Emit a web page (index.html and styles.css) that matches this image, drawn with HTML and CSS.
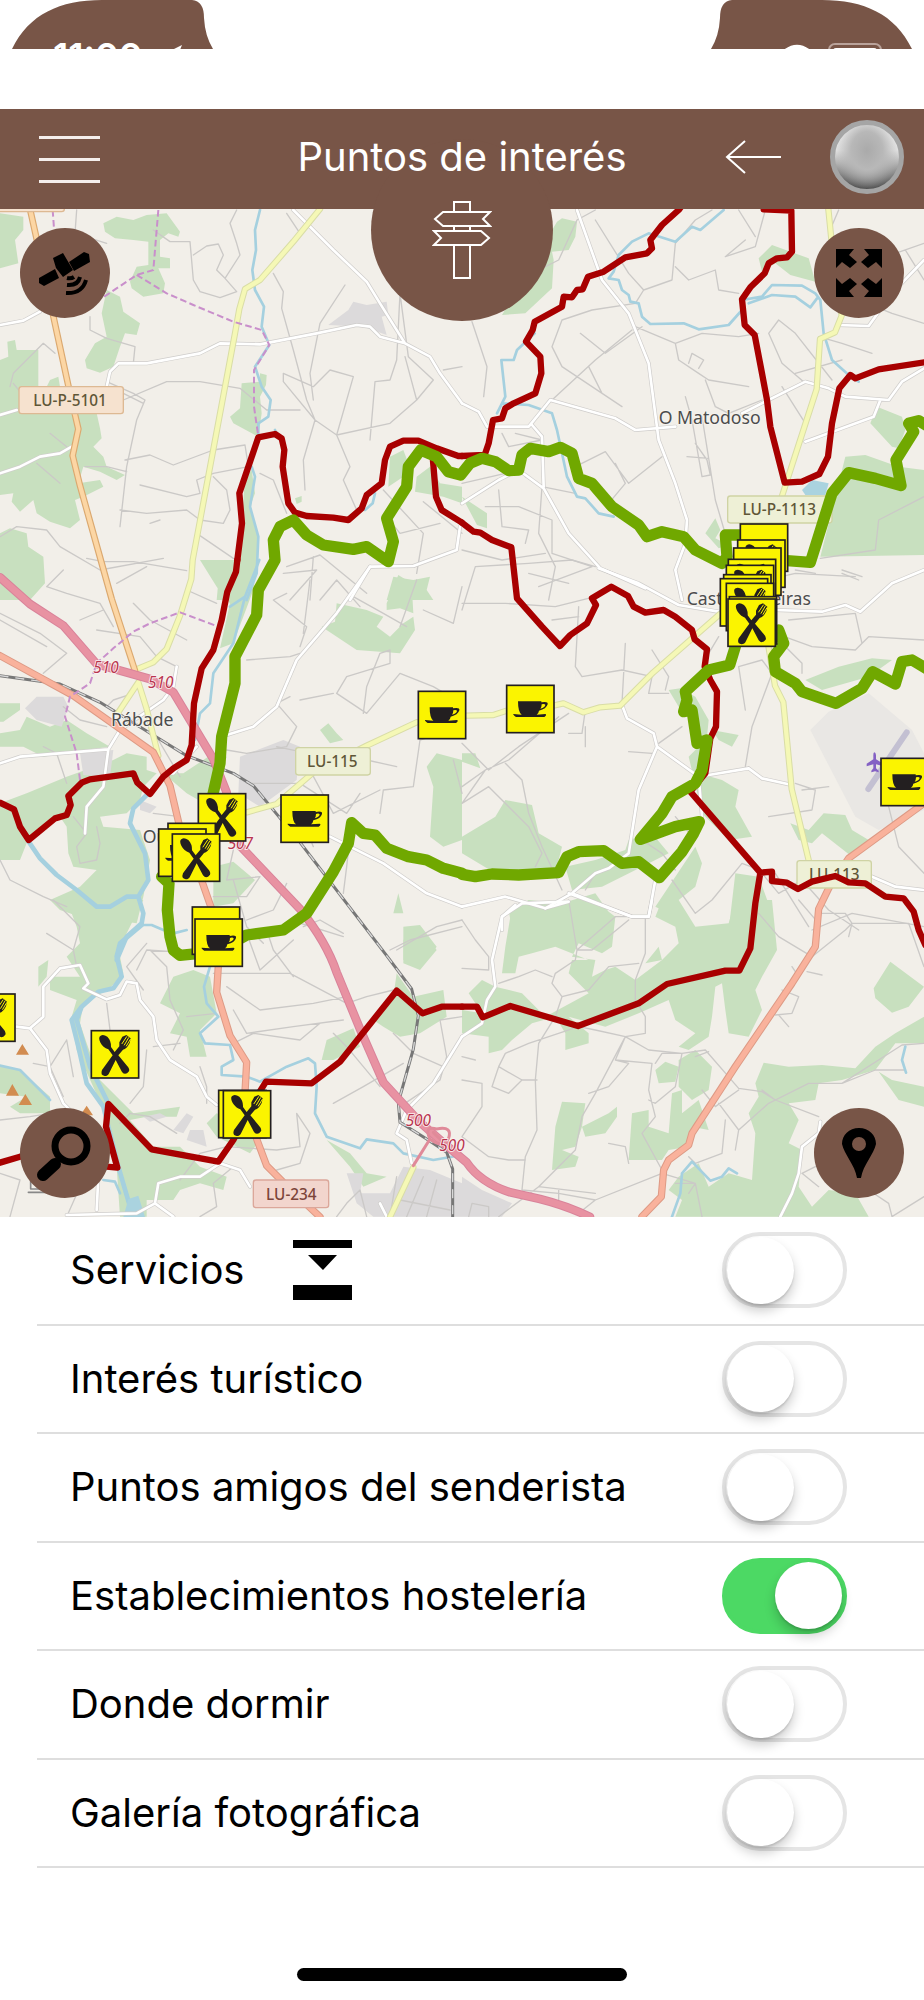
FILE: index.html
```html
<!DOCTYPE html>
<html lang="es">
<head>
<meta charset="utf-8">
<meta name="viewport" content="width=device-width, initial-scale=1">
<title>Puntos de interés</title>
<link rel="stylesheet" href="styles.css">
</head>
<body>
<div class="status">
  <div class="ear ear-left">
    <svg class="ear-shape" viewBox="0 0 202 49" aria-hidden="true"><path d="M0 49C17 14 48 0 90 0H180Q192 1 192 18Q193 36 201 49Z"/></svg>
    <div class="status-items"><span class="clock">11:00</span>
    <svg class="locate" viewBox="0 0 22 22" aria-hidden="true"><path d="M22 0L0 11L11 12L13 22Z"/></svg></div>
  </div>
  <div class="ear ear-right">
    <svg class="ear-shape" viewBox="0 0 202 49" aria-hidden="true"><path d="M202 49C185 14 154 0 112 0H22Q10 1 10 18Q9 36 1 49Z"/></svg>
    <div class="status-items">
    <svg class="wifi" viewBox="0 0 36 26" aria-hidden="true"><path d="M1 9Q18-7 35 9L31 13Q18 1 5 13Z"/><path d="M8 15Q18 7 28 15L18 25Z"/></svg>
    <svg class="battery" viewBox="0 0 54 26" aria-hidden="true"><rect class="cell" x="1" y="1" width="52" height="24" rx="6"/><rect x="5" y="5" width="44" height="16" rx="3"/></svg></div>
  </div>
</div>

<header class="bar">
  <button class="menu" aria-label="Menú"><span></span><span></span><span></span></button>
  <h1>Puntos de interés</h1>
  <div class="bar-end">
    <button class="back" aria-label="Volver"><svg viewBox="0 0 56 36"><path d="M56 18H2M20 2L2 18L20 34"/></svg></button>
    <button class="avatar" aria-label="Perfil"></button>
  </div>
</header>

<main>
<section class="map" aria-label="Mapa">
<svg class="canvas" viewBox="0 0 2772 3024">
<defs>
  <g id="plate"><rect class="plate" x="2" y="2" width="142" height="142"/></g>
  <g id="fork"><use href="#plate"/>
    <path class="ink" d="M30 17C18 22 32 52 53 58L66 76L34 120Q28 136 42 138Q52 138 56 128L75 90L94 126Q104 138 115 124Q118 116 109 107L83 76L97 59Q108 57 117 39L120 25L107 15L95 20L86 37L86 49L72 66L61 51Q62 32 50 20Q38 12 30 17Z"/>
    <path class="tines" d="M108 20L94 41M114 23L101 45M119 28L107 48"/></g>
  <g id="cup"><use href="#plate"/>
    <path class="ink" fill-rule="evenodd" d="M36 50H106V53Q127 49 125 59Q121 73 99 78Q98 86 92 90L118 88Q124 90 115 97H30Q20 90 22 88L47 90Q36 83 36 50ZM107 59Q107 68 103 72Q118 68 118 60Q115 56 107 59Z"/></g>
</defs>

<g class="wood">
  <g transform="translate(0,-27)">
    <path d="M0 40L70 50L70 90L45 120L55 190L0 205ZM310 70L350 50L400 60L440 45L500 40L540 95L535 110L505 100L480 120L480 170L510 175L510 205L475 205L495 250L490 280L430 290L395 265L390 245L410 200L445 195L445 125L400 120L345 115L315 95ZM320 270L360 290L370 335L420 370L410 405L375 400L360 440L340 500L300 518L260 505L255 480L285 430L320 410L305 340Z"/>
    <path d="M0 480L25 470L22 425L45 420L50 450L115 450L115 560L60 570L80 640L290 640L300 685L305 715L280 740L310 770L320 800L375 825L350 840L300 815L250 800L235 850L300 840L310 860L250 890L225 900L240 960L210 985L150 965L110 940L100 900L60 935L35 905L40 880L0 885ZM0 1000L30 985L80 1000L85 1040L130 1070L135 1150L90 1200H0ZM150 540L175 530L180 560L140 560ZM725 550L780 545L780 520L800 525L798 555L780 590L785 640L775 710L700 670L690 650L720 625ZM735 830L755 810L765 880L750 920L775 1010L770 1120L740 1200H650L655 1145L700 1130L720 1040L728 930ZM885 895L905 888L905 905L890 912ZM1170 770L1210 750L1225 790L1210 830L1165 860ZM1250 830L1290 800L1320 850L1386 860V910L1330 890L1245 875ZM1180 1130L1240 1140L1290 1130L1280 1170L1300 1200H1160Z"/>
  </g>
  <g transform="translate(1386,-27)">
    <path d="M285 65L300 55L345 65L340 110L320 150L270 155L275 180L270 265L190 340L120 345ZM890 175L930 135L1040 175L1060 245L985 225L940 190L900 215ZM1225 670L1245 620L1320 650L1330 690L1310 745L1290 740ZM1135 830L1150 770L1210 765L1280 790L1310 800L1386 810V1065L1075 1070ZM730 1000L760 955L775 990L760 1015L800 1035L770 1045ZM0 890L75 940L75 985L45 975Z"/>
  </g>
  <g transform="translate(0,1053)">
    <path d="M1010 130L1100 150L1150 170L1130 200L1170 230L1210 190L1240 170L1245 210L1200 280L1070 270L965 200L1005 185ZM1160 130L1195 45L1235 70L1240 160L1200 145L1160 150ZM600 0H720L770 10L760 90L700 250L660 265L690 130L650 80ZM0 430L60 430L60 450L10 485H0ZM80 470L150 500L200 480L260 520L330 560L250 570L130 590L70 560L0 560V520L60 510ZM340 600L380 580L440 590L440 630L470 640L430 680L420 720L380 760L300 770L310 800L420 810L450 900L430 1010L410 1090L340 1080L240 1070L180 1050L150 1020L240 980L290 930L220 920L205 880L200 800L180 770L80 850L60 900H0V730L80 700L200 650ZM550 640L640 580L680 590L630 740L560 700L490 640ZM960 510L985 490L1010 520L1030 540L990 550ZM1280 620L1310 580L1386 600V840L1330 860L1290 830L1300 680ZM640 920L700 905L765 960L700 1030L640 1040ZM1195 1000L1210 1060L1180 1060ZM1210 1100L1260 1095L1310 1160L1280 1200L1210 1200Z"/>
  </g>
  <g transform="translate(1386,813)">
    <path d="M0 820L40 820L55 865L0 845ZM620 630L655 625L700 650L740 720L735 770L690 760L680 690L650 680ZM750 750L830 765L810 800L770 780ZM1030 600L1130 560L1230 535L1290 540L1220 590L1080 630ZM0 1070L100 1010L130 960L210 975L230 1060L300 1100L280 1180L200 1190L100 1180L0 1120ZM310 1160L400 1140L490 1110L500 1080L570 1060L620 1120L540 1160L420 1220L330 1230ZM680 830L720 790L740 830L710 880L780 900L830 930L820 980L870 1070L800 1080L720 1000ZM985 1030L1040 1050L1085 1000L1150 1005L1170 1050L1220 1080L1170 1130L1080 1060L1050 1090L1010 1080ZM140 1290L200 1260L300 1270L400 1240L450 1310L430 1350H150ZM580 1280L700 1100L720 1150L700 1220L650 1260L620 1300ZM820 1180L890 1190L930 1300V1350H800Z"/>
  </g>
  <g transform="translate(0,2073)">
    <path d="M200 0H430L380 100L360 170L370 220L330 265L250 310L240 370L260 430L300 540L400 640L540 620L530 650L440 650L390 660L460 740L540 740L600 800L680 830L670 870L600 850L540 870L520 900L440 900L440 950H360L350 800L320 650L230 450L215 350L230 300L150 270L150 230L240 230L200 170L240 130L230 80ZM115 200L145 180L140 230L115 260ZM520 230L580 210L630 230L650 340L600 390L620 470L570 470L560 410L510 400L540 340L480 310ZM0 495L60 510L150 590L150 640L60 640L30 620L80 590L0 580ZM620 670L650 640L700 660L780 720L750 760L690 730L650 710ZM980 420L1060 385L1080 440L1000 480H965ZM1190 220L1240 290L1330 270L1340 350L1260 400L1200 410L1150 380L1120 360L1180 290ZM1210 120L1260 80L1310 150L1260 210L1210 190ZM980 720L1050 760L1100 820L1160 830L1090 860L1050 800Z"/>
  </g>
  <g transform="translate(1386,2073)">
    <path d="M150 20L310 0L320 60L420 20L460 50L450 140L420 160L350 130L330 170L400 180L390 230L430 210L460 200L520 240L600 180L550 190L590 140L600 180L650 130L640 80L580 50L600 0H650L700 80L800 70L820 0H930L945 150L900 230L880 270L900 330L860 410L800 400L790 330L780 250L760 260L750 350L740 410L680 450L650 440L700 400L640 360L620 300L530 340L430 380L320 350L380 400L380 430L310 450L310 400L280 350L210 370L150 420L120 450L80 460L80 410L0 400V330L60 340L20 280L60 240L100 260L180 280L250 350L380 280L320 220L330 180L380 180L280 140L210 160L170 170L160 220L120 220L130 140Z"/>
    <path d="M1235 265L1285 185L1386 260L1340 320L1290 338L1240 295ZM905 488L980 500L1080 495L1180 505L1240 440L1300 400L1386 350V430L1300 430L1240 510L1140 540L1070 550L1060 600L980 610L1010 660L980 730L1020 750L1010 860L1050 920L1100 870L1180 880L1220 950H640L660 900L620 870L650 830L710 790L740 860L800 820L870 840L880 700L860 640L890 590L880 550ZM1250 515L1290 540L1386 560V620L1310 600ZM300 605L370 610L360 680L340 740L300 750L350 770L340 800L270 810L280 680ZM580 510L610 485L650 500L640 545L590 550ZM650 480L700 450L750 500L740 570L690 600L650 560ZM500 780L510 640L560 630L560 680L620 700L630 580L660 570L660 640L710 600L740 690L690 680L680 740L620 750L600 780ZM360 680L440 640L465 620L465 650L430 700L370 710Z"/>
  </g>
</g>

<g class="town">
  <path transform="translate(0,-27)" d="M985 375L1045 330L1060 305L1100 315L1160 305L1165 345L1145 350L1160 405L1090 380Z"/>
  <path transform="translate(0,1053)" d="M75 445L110 410L190 410L205 440L185 500L110 480ZM240 580L340 570L330 650L250 645ZM720 590L850 540L900 560L890 660L780 740L715 700ZM420 720L470 740L450 760L420 750Z"/>
  <path transform="translate(0,2073)" d="M430 650L480 640L500 650L450 665ZM520 690L560 640L580 650L550 700ZM570 690L610 690L620 740L560 720ZM1040 820L1090 820L1080 880L1170 880L1210 800L1290 810L1386 850V950H1120L1070 910Z"/>
  <path transform="translate(1386,2073)" d="M0 830L60 870L150 910L120 950H0Z"/>
  <path class="field" transform="translate(1386,813)" d="M1045 750L1100 695L1220 640L1350 750L1386 820V990L1250 1050L1180 1010Z"/>
</g>

<g class="minor">
  <path transform="translate(0,-27)" d="M230 30L225 100L320 130M460 90L510 125L570 125L580 240L600 275L660 293L710 275M710 30L690 70L710 130L720 165L675 235L710 275M580 165L620 138L655 132L670 165L650 210L675 235M820 220L850 275L845 325L880 450L920 600L945 660L1010 705L1170 670L1250 600M945 660L910 780L915 870M1035 255L960 370L930 520L940 600M1010 705L1060 530L990 510L940 560L850 520L850 545L945 660M1010 705L1050 800L1030 840L1070 930M1110 720L1125 545L1170 540L1190 480L1200 280M1200 280L1225 470L1300 540L1250 600L1215 470M860 40L900 100M270 350L270 390L320 415L405 440L400 490M320 545L400 580L435 600L410 660L380 800L360 980M370 580L430 610M370 600L500 545L600 545L720 565L800 630L900 630M375 780L450 765L520 795L640 750L735 735L745 800L640 820L590 840L600 880L560 890L420 855M360 930L440 940L560 930L600 960L670 970L690 930L680 870L640 830M450 970L480 960M780 820L820 840L860 940M0 1010L50 980L140 990L180 1040L300 1110L490 1075M260 1075L310 1085L400 1085L560 1112M350 1150L440 1100M590 1000L700 1075M255 800L320 800L380 815M150 700L200 740M110 790L180 850M30 560L40 520L130 430L165 460M40 550L80 600M1150 870L1270 1000L1250 1120M860 1100L960 1065L1100 1180M850 1120L950 1110L870 1200M1270 905L1386 1000M1160 950L1200 1000L1320 970M1330 510L1386 500M940 1070L930 1200"/>
  <path transform="translate(1386,-27)" d="M30 365L75 500L65 590M0 270L30 240L150 250L290 180L345 60L400 30M400 60L500 220L545 270L630 240L640 130L700 60L750 30M545 270L520 310L390 330L300 360L270 440L300 500L480 620M355 400L430 460L540 380M380 500L420 580M270 600L400 480L510 390M520 380L640 430L720 400L830 410L890 400M640 430L650 480L710 520L740 540L860 560M680 490L690 460L725 480L710 505M640 200L680 240L760 210L770 270L830 280M790 170L880 140L910 30M790 170L850 120M830 30L880 110M920 400L950 360L1000 400L1110 540M920 400L960 490L1030 550M1070 410L1140 430L1230 460M1130 30L1100 100M1240 320L1290 340L1386 370M1300 160L1386 130M1330 150L1386 240M730 540L760 620L800 640L900 600M670 590L690 660L720 830L745 825L735 780L700 730M675 770L740 775M720 650L760 900L810 1070M600 770L500 850L430 755L340 800M460 790L490 850L440 910M120 700L140 740L240 720L160 700M0 850L130 820M110 870L120 980L200 990L190 1030M70 920L170 920L270 960L270 1060L390 1100L230 1160M0 1050L120 1080L250 1060M240 860L230 1000L280 1100L260 1200M190 830L240 860L340 880M1075 1075L1240 1050L1250 960L1386 890M870 1150L1000 1120L1180 1130M1140 1110L1200 1130M960 560L1030 670M1000 520L1140 480"/>
  <path transform="translate(0,1053)" d="M0 160L120 220L200 280L130 340M0 180L140 260M190 30L140 80L200 100L300 130L340 200M240 180L310 150M290 210L420 230L470 290L530 320M400 130L450 180L560 240M560 90L650 130M740 300L870 290L900 280M860 100L820 120L920 200L900 260M930 60L910 220M1060 110L1150 160L1220 200M960 120L1010 60L1080 140M1200 200L1250 60M1386 80L1360 190L1270 150M870 410L830 430L890 500L860 560L740 580L680 570M1090 460L1100 380L1140 280L1170 270L1170 310L1040 350L1010 400L1100 460L1200 340L1300 380L1386 430M900 420L1000 400M1140 760L1150 690L1240 680L1260 540L1386 500M830 560L900 575L1000 760L1140 690M740 670L900 670L1040 760M1040 760L1080 700M940 860L900 760M190 440L240 480L320 500M320 440L340 420L400 400M290 800L300 850L290 900L240 910L230 860L260 820L220 770M130 560L170 580L200 670M440 480L540 650M460 760L540 770M0 900L30 960L130 1010L200 1040M700 870L680 960L780 950L740 1010L640 1010M700 960L740 1100L790 1150M1030 1000L1040 920L1050 830M910 1100L960 1080L1030 1120M1386 1080L1310 1100L1190 1170M1190 620L1100 600M1360 600L1386 700M860 970L820 1050L740 1080"/>
  <path transform="translate(1386,813)" d="M0 390L40 260L200 250L330 240L400 260M0 370L130 370L280 380L400 350M200 280L320 310M270 420L350 410M350 380L340 560L360 590L480 570L570 590L560 640L620 640M490 490L480 670M570 510L620 590L610 630M370 690L360 760L320 760M370 800L370 740M0 790L80 870L170 800L320 700M0 920L70 870L140 840L290 710M130 850L180 900L200 1000L240 1100L300 1230M70 870L0 970L80 920L200 1040L240 1120L220 1160M500 815L570 820M660 740L590 790M850 860L870 740L930 580L900 540L830 560L850 690M940 460L1050 500L1180 510L1220 470L1386 480M960 490L1020 550L1020 580M980 420L1180 400L1200 490M1140 280L1190 300M1000 270L1060 280M770 470L740 520M920 1010L1050 990L1060 930L1000 910M900 900L860 860M1020 930L1100 920M700 1080L640 1010M540 1080L600 1120L640 1170M630 1200L700 1300L750 1260L840 1150L920 1180M900 1180L950 1240L1020 1200L1100 1290L1190 1350M1050 1350L1170 1300L1386 1340M940 1180L1040 1340M1280 980L1310 1100L1386 1180M400 1180L370 1230"/>
  <path transform="translate(0,2073)" d="M140 100L220 150L240 80L160 0M220 150L230 200M320 310L330 390M410 210L440 150L600 160L620 60M450 150L500 200L510 300L550 390L520 450M430 270L380 200L440 130M560 350L650 340M640 220L870 220L1040 310L1100 290L1180 270M680 260L780 330L940 310L1040 290M700 330L740 400L880 380L1030 360M700 430L760 400L900 420L960 370M880 120L780 210L740 100M870 60L1030 110M800 90L820 150L880 230M1170 150L1230 120L1386 80M1386 350L1320 360L1340 470L1320 540L1200 620L1150 540M1180 400L1240 460L1330 500M1210 490L1090 560L1000 610M1000 400L1040 440L1140 560M200 420L150 500L190 590M200 420L220 530M100 490L150 500M0 660L90 650L150 640M440 450L430 560L390 610M460 440L540 430M600 500L620 560L620 610M540 840L600 760L680 740L830 750L900 740L890 640L930 700L900 790L830 810M0 820L60 840L30 950M360 670L390 640L450 650L530 700M240 860L200 950M700 800L640 850L650 920L600 950M1010 950L1040 910L1080 870L1100 950M1190 830L1170 950M1270 830L1220 950M1310 840L1280 950M1200 900L1350 930"/>
  <path transform="translate(1386,2073)" d="M320 0L345 150L340 180L280 220L270 250L300 290L280 350L230 430L220 540L225 690L190 770L180 870M345 150L460 50L550 50M345 150L390 150L500 60M550 50L550 160L520 240L520 300L550 350L550 400L490 410L400 580L360 650L340 750L230 860M300 290L380 270L440 200L530 190M110 250L140 240L170 230L220 210L270 230M0 60L40 120L80 170L80 210L0 205M350 380L400 390L490 410L560 450L660 460L730 450L830 565L900 575L940 600L1070 650M460 480L570 490L560 570L580 650L540 700L600 810M490 410L460 480L500 490L440 560L380 580M580 490L600 460L660 460L640 560L580 610L560 600M740 455L700 470M830 570L760 620L720 570M770 610L830 690L920 610L1040 550L1140 550L1240 510L1330 510M830 690L820 750M790 660L780 760L700 790L680 770M940 600L900 570M1140 550L1320 435L1386 430M350 380L200 430L130 460L110 500L180 540L225 540M110 500L90 560L140 580L180 540M0 540L60 550L60 620L0 710L80 770L140 780L190 780M180 870L290 880L400 900L600 820L700 850L720 950M400 900L350 940M230 860L110 950M230 860L400 880M440 730L490 740L500 790M890 40L950 110L1050 170L1150 90L1170 70L1340 70L1386 200M1010 0L1070 70M1080 40L1150 40L1170 70L1160 110M1035 215L1080 225M990 200L1010 230M960 270L1010 290L990 340L940 345M950 345L980 380M1020 820L1070 860M1020 820L1060 800M1386 890L1290 950L1280 910L1220 870M20 950L30 910L80 920L80 950M640 850L700 850L680 880M290 870L290 900M0 470L40 480"/>
</g>

<g class="water">
  <path transform="translate(0,-27)" d="M780 30L765 90L768 150L757 210L765 270L792 320L785 380L808 435L765 500L785 560L812 600L805 650L775 670L775 710M825 690L840 720M755 800L765 830L750 920L775 1010L770 1120L740 1200M1125 880L1118 910L1095 930"/>
  <path transform="translate(1386,-27)" d="M785 30L715 90L690 80L640 125L560 100L510 125L470 165L455 215L440 235L470 240L480 270L500 285L505 305L530 310L540 350L565 372L665 370L710 388L800 375L840 330M840 300L900 290L930 255L1020 257L1060 280L1075 300L1085 400L1110 480L1160 525L1190 545M860 310L930 285L1000 290L1045 322L1065 295M218 400L165 450L155 480L118 480L130 590L105 640M120 610L200 615L270 640L285 690L300 760L315 830L345 890L370 895L410 940L455 950"/>
  <path transform="translate(0,1053)" d="M778 0L735 110L700 250L640 340L630 430L600 460L585 540M735 110L690 140M425 1095L455 1095L490 1110L520 1120L560 1110"/>
  <path class="river" transform="translate(0,1053)" d="M86 845L120 895L170 945L230 990L290 1040L330 1040L380 1010L415 1010L430 1060L425 1090L380 1130L350 1200M440 705L400 745L390 790L435 880L445 960L415 1010"/>
  <path class="river" transform="translate(0,2073)" d="M425 75L360 130L350 170L365 230L340 265L295 275L245 320L215 360L235 440L260 550L310 620L355 800L390 920M245 320L230 360L270 500L320 600"/>
  <path transform="translate(0,2073)" d="M0 497L60 510L150 600M310 840L345 845L360 880M630 200L612 260L620 310L655 350L600 400L615 430L690 435L700 480L665 500L665 525L740 530L780 545L860 500L925 475L945 490L950 560L945 640L980 710L1080 745L1100 718L1180 730L1210 760L1300 780L1386 765"/>
  <path transform="translate(1386,2073)" d="M630 950L655 880L660 820L690 785L745 842L780 830L800 805L825 820M1330 440L1320 480L1332 518"/>
  <path class="pool" transform="translate(1386,-27)" d="M1020 870L1050 840L1100 850L1090 885L1030 885Z"/>
  <path class="pool" d="M370 3024L385 2970L415 2960L435 3024Z"/>
</g>

<g class="casing">
  <path id="w1" transform="translate(0,-27)" d="M0 375L70 362L120 335M0 645L50 630M320 560L330 515L355 490L440 490L600 460L660 430L780 433L950 400L1070 375L1110 380L1140 410L1215 430L1290 470L1320 520L1386 610M880 30L1000 150L1100 245L1140 310L1215 430M0 820L60 800L120 770L180 760L215 740M1050 1200L1110 1100L1240 1098L1370 1050L1380 980"/>
  <path id="w2" transform="translate(1386,-27)" d="M345 30L420 240L500 340L560 490L590 720L640 850L675 960L670 1030L640 1110L660 1200M0 610L50 635L75 680L200 680L265 600L460 655L520 690L640 680M840 640L1030 545L1100 565L1150 590L1280 600L1320 545L1386 505M1255 600L1235 650L1030 725M1386 180L1290 280L1240 350L1220 378L1130 375M0 910L110 840L170 810L245 865L320 1000L415 1105L550 1165M210 675L240 710L245 860"/>
  <path id="w3" transform="translate(0,1053)" d="M1110 20L1010 160L890 300L830 440L760 500L680 525M0 610L60 590L325 568L310 680L260 740L255 820M325 568L360 510L490 420L520 380L530 320M590 560L520 640L490 640M990 830L1150 910L1280 1000L1386 1040"/>
  <path id="w4" transform="translate(1386,813)" d="M410 265L530 310L650 375L770 395M940 390L1080 395L1150 375L1195 395L1290 310L1386 270M480 675L495 715L575 760L585 800L710 890L740 885L860 865L900 895L990 915M585 800L530 930L500 1120L440 1165L400 1180L330 1240L250 1285L130 1250L0 1280M330 1240L510 1310L560 1310L580 1200M120 1350L120 1310L160 1275M710 890L720 1010M1230 1190L1300 1220L1386 1230"/>
  <path id="w5" transform="translate(0,2073)" d="M50 380L90 385L130 350L130 260L180 205L240 195L265 250L250 265L320 298L360 285L380 245L410 250L420 300L460 350L470 420L510 480L590 530L620 590L650 615M90 385L140 450L150 520L190 610L220 640M290 930L295 830M200 945L410 940L465 910L475 850L540 830L600 830L660 790L720 810L750 860M465 910L520 950M1386 410L1300 550L1220 630L1190 700L1220 720L1235 790M1140 910L1160 950"/>
  <path id="w6" transform="translate(1386,2073)" d="M0 410L60 370L75 300L100 260L90 180L120 50L180 10L320 5L250 25M320 -20L510 50L560 50L570 0M955 950L990 880L1010 820L1020 740L1070 700L1075 665"/>
</g>
<g class="road"><use href="#w1"/><use href="#w2"/><use href="#w3"/><use href="#w4"/><use href="#w5"/><use href="#w6"/></g>

<g class="rail">
  <path id="rail" d="M0 1400L180 1425L300 1480L560 1640L700 1693L760 1730L900 1900L1160 2240L1235 2340L1255 2420L1240 2520L1195 2680L1200 2740L1280 2790L1340 2830L1358 2880V3024"/>
</g>
<use class="rail-dash" href="#rail"/>

<g class="yellow-edge">
  <path id="y1" d="M960 0L880 98L780 213L735 240L718 300L705 373L578 1053M578 1053L574 1110L540 1220L500 1320L460 1360L400 1385M355 1510L415 1420L440 1500L475 1640M740 1810L830 1785L940 1690L1100 1610L1250 1540M1400 1520L1480 1518L1520 1505M1660 1490L1690 1483L1750 1510L1800 1495L1860 1490L1960 1390L2160 1215M2485 0L2500 150L2525 320L2505 370L2460 390L2450 540L2340 880M2305 1310L2325 1430L2350 1480L2375 1740L2430 1970M1240 2875L1170 3024"/>
</g><use class="yellow" href="#y1"/>
<g class="orange-edge"><path id="o1" d="M90 0L110 90L205 530L235 660L218 740L240 830L335 1170L405 1385"/></g><use class="orange" href="#o1"/>
<g class="salmon-edge"><path id="s1" d="M0 1340L220 1460L460 1630L510 1730L550 1900M600 2000L635 2100L655 2270L650 2350L690 2480L740 2560L735 2650M770 2790L800 2870L850 2920L960 3024M2772 1783L2546 1948L2486 2038L2456 2100L2446 2213L2376 2323L2206 2573L2076 2773L2066 2808L2006 2853L1991 2883L1984 2963L1926 3023"/></g><use class="salmon" href="#s1"/>
<g class="motor-edge"><path id="m1" d="M0 1105L90 1185L190 1250L290 1365L450 1410L520 1450L640 1650L680 1750M720 1910L900 2100Q980 2200 1010 2290L1080 2460L1150 2620L1260 2740L1340 2810L1400 2860Q1440 2920 1530 2950L1620 2970Q1700 2990 1770 3024"/></g><use class="motor" href="#m1"/>
<path class="ramp" d="M1240 2870L1290 2790Q1270 2750 1310 2760Q1360 2750 1345 2790Q1330 2820 1290 2790M1300 2770L1340 2810"/>

<g class="border">
  <path transform="translate(0,-27)" d="M158 30L162 85M475 30L460 210L410 225L305 295M410 225L500 280L580 315L700 365L785 390L808 435L762 510L762 620L775 710"/>
  <path transform="translate(0,1053)" d="M240 660L230 580L195 470L210 410L270 370L290 310L340 265L400 215L450 190L540 157L655 200"/>
</g>
<g class="runway"><path d="M2605 1740L2720 1570"/></g>
<path class="plane" transform="translate(2600,1630)" d="M23 0Q27 0 28 8V21L50 34V42L28 36V48L36 55V60L25 57L14 60V55L20 48V36L0 42V34L20 21V8Q20 0 23 0Z"/>
<path class="peak" d="M48 2537L67 2505L87 2537ZM18 2660L37 2625L57 2660ZM56 2688L76 2655L96 2688ZM241 2719L260 2690L279 2719Z"/>
<path class="museum" d="M85 2950H180M92 2940H170M92 2900V2940M110 2900V2930"/>

<g class="shield">
  <rect class="sh-orange" x="57" y="533" width="313" height="81" rx="8"/><rect class="sh-orange" x="-120" y="-73" width="313" height="81" rx="8"/>
  <rect class="sh-yellow" x="2183" y="861" width="313" height="81" rx="8"/>
  <rect class="sh-yellow" x="887" y="1616" width="224" height="82" rx="8"/>
  <rect class="sh-yellow" x="2391" y="1955" width="223" height="82" rx="8"/>
  <rect class="sh-red" x="760" y="2913" width="226" height="83" rx="8"/>
  <g class="sh-text">
    <text x="210" y="592">LU-P-5101</text><text x="2338" y="919">LU-P-1113</text>
    <text x="997" y="1675">LU-115</text><text x="2503" y="2013">LU-113</text><text class="red-text" x="874" y="2972">LU-234</text>
  </g>
</g>
<g class="place">
  <text x="1976" y="645">O Matodoso</text>
  <text x="333" y="1550">Rábade</text>
  <text x="428" y="1902">Outeiro</text>
  <text x="2060" y="1188">Castro Ribeiras</text>
</g>
<g class="exit">
  <text x="280" y="1392">510</text><text x="444" y="1437">510</text><text x="683" y="1920">507</text>
  <text x="1217" y="2752">500</text><text x="1318" y="2826">500</text>
</g>

<g class="red-route">
  <path transform="translate(0,1053)" d="M0 728L42 748L60 800L86 840L165 775L200 765L212 735L205 708L245 668L270 658L400 640L412 668L450 702L490 650L520 625L560 600L575 555L582 430L605 325L640 270L665 180L682 95L708 35L712 0"/>
  <path transform="translate(0,-27)" d="M712 1080L726 970L718 880L775 712L825 702L845 715L853 750L848 800L865 910L885 938L920 948L1000 953L1045 960L1085 925L1100 885L1145 850L1155 780L1170 740L1210 722L1255 722L1310 745L1375 768H1386M1298 770L1308 890L1325 930L1386 968"/>
  <path transform="translate(1386,-27)" d="M0 768L68 765L80 730L93 660L120 655L130 625L155 610L220 580L238 520L235 470L192 425L212 390L218 365L300 320L305 290L330 292L345 270L362 268L378 230L425 215L490 172L555 160L570 145L565 120L600 75L650 30L665 10M905 28L988 32L990 155L975 172L945 175L920 190L908 220L865 262L840 298L848 375L878 405L900 520L915 600L925 680L968 848L1020 845L1072 822L1098 770L1110 670L1132 565L1165 525L1180 535L1250 508L1400 485"/>
  <path transform="translate(1386,813)" d="M0 128L35 155L55 158L90 180L148 202L165 355L240 440L294 498L325 465L375 430L402 375L390 355L448 320L498 348L515 380L550 398L605 390L640 410L690 450L698 478L735 508L728 560L745 600L765 635L762 740L745 775L730 880L685 935L895 1178L880 1270L865 1405L832 1472L790 1472L615 1512L530 1570L348 1638L145 1578L62 1612L45 1580H0M895 1178L930 1175V1203L975 1208L1008 1227L1050 1205L1120 1188L1160 1207L1210 1210L1270 1250L1325 1255L1355 1295L1370 1350L1390 1395"/>
  <path transform="translate(0,2073)" d="M1386 320H1325L1268 340L1190 272L1020 485L935 550L798 545L770 590L700 720L655 785L455 748L325 612L318 680L352 803L320 800L180 750L60 770L0 788"/>
</g>
<g class="green-route">
  <path transform="translate(0,1053)" d="M485 950L507 970L502 1050L510 1130L520 1170L540 1186L650 1175L740 1125L850 1110L920 1060L1000 935L1045 850L1055 788L1090 820L1125 825L1160 865L1225 890L1280 900L1330 925L1386 940M635 720L660 610L665 530L705 370L705 290L770 165L775 90L825 0L820 -60L840 -100L880 -120L920 -75L970 -45L1060 -32L1100 -40L1165 5L1180 -55L1160 -125L1220 -220L1225 -280L1262 -330L1310 -310L1345 -265L1382 -255L1410 -290L1446 -305L1486 -295L1526 -268L1556 -270L1566 -315L1591 -335L1646 -325L1681 -338L1716 -320L1736 -245L1776 -230L1836 -160L1916 -105L1941 -70L1986 -85L2051 -70L2086 -30L2166 10L2181 -10L2176 -75H2226"/>
  <path transform="translate(1386,-27)" d="M900 1082L975 1082L1045 1087L1110 880L1160 818L1240 835L1317 857L1302 780L1355 695L1340 670L1370 662L1400 680"/>
  <path transform="translate(1386,813)" d="M0 1183L40 1190L90 1182L170 1185L290 1178L315 1130L350 1115L425 1112L480 1150L530 1145L592 1193L660 1115L695 1060L712 1025L640 1040L535 1078L600 1000L630 950L700 910L720 870L735 780L705 790L690 690L665 695L675 660L670 635L740 570L803 555L820 500M950 450L965 490L935 530L940 575L1000 610L1020 635L1122 670L1200 625L1232 575L1300 612L1320 545L1350 540L1400 570"/>
</g>

<g transform="translate(0,1053)">
  <use href="#fork" x="593" y="699"/><use href="#plate" x="502" y="788"/><use href="#cup" x="474" y="805"/><use href="#fork" x="515" y="820"/>
  <use href="#cup" x="841" y="703"/><use href="#plate" x="575" y="1039"/><use href="#cup" x="583" y="1075"/><use href="#cup" x="1253" y="392"/>
</g>
<g transform="translate(1386,813)">
  <use href="#cup" x="132" y="614"/><use href="#plate" x="833" y="130"/><use href="#fork" x="825" y="178"/><use href="#plate" x="813" y="202"/>
  <use href="#fork" x="797" y="236"/><use href="#fork" x="791" y="254"/><use href="#plate" x="783" y="282"/><use href="#plate" x="773" y="294"/>
  <use href="#fork" x="791" y="308"/><use href="#plate" x="800" y="348"/><use href="#fork" x="796" y="355"/><use href="#cup" x="1255" y="833"/>
</g>
<g transform="translate(0,2073)">
  <use href="#fork" x="-99" y="280"/><use href="#fork" x="272" y="390"/><use href="#plate" x="654" y="569"/><use href="#fork" x="668" y="570"/>
</g>
</svg>

<div class="sign">
  <svg viewBox="0 0 60 80" aria-hidden="true"><path d="M22 12V2H38V12M11 12H58L51 19L58 26H11L3 19ZM22 26V31M38 26V31M2 31H49L57 38L49 45H2L9 38ZM22 45V78H38V45"/></svg>
</div>
<button class="round top left" aria-label="Satélite">
  <svg viewBox="0 0 90 90"><path d="M33 30L43 25L53 42L43 49L36 40ZM49 34L64 24L69 26L70 34L54 43ZM19 50L35 41L39 50L24 58L19 55Z"/><path class="waves" d="M47 50Q51 51 54 49M47 57Q58 58 60 49M46 65Q62 66 66 52"/></svg>
</button>
<button class="round top right" aria-label="Pantalla completa">
  <svg viewBox="0 0 90 90"><g id="quad"><path d="M22 21H40L35 27L43 34L36 40L28 34L22 40Z"/></g><use href="#quad" transform="matrix(-1 0 0 1 90 0)"/><use href="#quad" transform="matrix(1 0 0 -1 0 90)"/><use href="#quad" transform="matrix(-1 0 0 -1 90 90)"/></svg>
</button>
<button class="round bottom left" aria-label="Buscar">
  <svg viewBox="0 0 90 90"><circle class="lens" cx="51" cy="38" r="16"/><path class="handle" d="M35 56L23 67"/></svg>
</button>
<button class="round bottom right" aria-label="Mi ubicación">
  <svg viewBox="0 0 90 90"><path fill-rule="evenodd" d="M45 20C55 20 62 27 62 36C60 46 49 57 47 70H43C41 57 30 46 28 36C28 27 35 20 45 20ZM45 29A7 7 0 1 0 45 43A7 7 0 1 0 45 29Z"/></svg>
</button>
</section>

<ul class="layers">
  <li><label for="l1">Servicios</label>
    <button class="collapse" aria-label="Contraer"><svg viewBox="0 0 59 60"><path d="M0 0H59V8H0ZM15 15H44L30 30ZM0 45H59V60H0Z"/></svg></button>
    <input type="checkbox" role="switch" id="l1"></li>
  <li><label for="l2">Interés turístico</label><input type="checkbox" role="switch" id="l2"></li>
  <li><label for="l3">Puntos amigos del senderista</label><input type="checkbox" role="switch" id="l3"></li>
  <li><label for="l4">Establecimientos hostelería</label><input type="checkbox" role="switch" id="l4" checked></li>
  <li><label for="l5">Donde dormir</label><input type="checkbox" role="switch" id="l5"></li>
  <li><label for="l6">Galería fotográfica</label><input type="checkbox" role="switch" id="l6"></li>
</ul>
</main>
<div class="home"></div>
</body>
</html>
```

FILE: styles.css
```css
* { box-sizing: border-box; }
body {
  margin: 0;
  min-height: 100vh;
  display: flex;
  flex-direction: column;
  background: #fff;
  color: #000;
  font-family: Inter, Roboto, sans-serif;
  overflow-x: hidden;
}
button { border: 0; padding: 0; background: none; cursor: pointer; }
svg { display: block; }

.status {
  display: flex;
  justify-content: space-between;
  height: 49px;
  margin-bottom: 60px;
  padding: 0 12px;
  overflow: hidden;
}
.ear { display: grid; width: 202px; height: 49px; }
.ear > * { grid-area: 1 / 1; }
.ear-shape { width: 202px; height: 49px; fill: #785547; }
.status-items {
  display: flex;
  align-items: flex-start;
  gap: 14px;
  padding-top: 43px;
  color: #fff;
  fill: #fff;
}
.ear-left .status-items { padding-left: 41px; gap: 22px; }
.ear-right .status-items { padding-left: 70px; }
.clock { font-size: 36px; font-weight: 600; line-height: 26px; }
.locate { width: 18px; height: 22px; }
.wifi { width: 34px; height: 26px; }
.battery { width: 54px; height: 26px; }
.cell { fill: none; stroke: #b9a29a; stroke-width: 2; }

.bar {
  display: grid;
  grid-template-columns: 1fr auto 1fr;
  align-items: center;
  height: 100px;
  padding: 0 20px 4px 39px;
  background: #785547;
  color: #fff;
}
.bar h1 {
  position: relative;
  z-index: 1;
  margin: 0;
  padding-right: 19px;
  font-size: 40px;
  font-weight: 400;
  line-height: 48px;
}
.menu { display: flex; flex-direction: column; justify-content: space-between; width: 61px; height: 47px; margin-top: 4px; }
.menu span { height: 3px; background: #f4eeec; }
.bar-end { display: flex; justify-content: flex-end; align-items: center; gap: 49px; }
.back svg { width: 56px; height: 36px; fill: none; stroke: #fff; stroke-width: 2; }
.avatar {
  width: 74px;
  height: 74px;
  border: 5px solid #a5a5a5;
  border-radius: 50%;
  background: radial-gradient(ellipse at 50% 40%, #aaa 0, #b8b8b8 35%, transparent 75%), linear-gradient(#fff 0, #e8e8e8 40%, #888 75%, #444 100%);
}

.map { position: relative; background: #f2efe9; }
.canvas { width: 100%; height: auto; font-family: "Noto Sans", sans-serif; }
.canvas path { stroke-linejoin: round; stroke-linecap: round; }
.wood { fill: #c8e0bf; }
.town { fill: #dcdadb; }
.town .field { fill: #e9e7e4; }
.minor { fill: none; stroke: #cbc9c7; stroke-width: 4; }
.water { fill: none; stroke: #a5d0df; stroke-width: 8; }
.water .river { stroke-width: 14; }
.water .pool { fill: #aad3df; stroke: none; }
.casing { fill: none; stroke: #cfcdcb; stroke-width: 12; }
.road { fill: none; stroke: #fff; stroke-width: 8; }
.rail { fill: none; stroke: #777; stroke-width: 9; }
.rail-dash { fill: none; stroke: #d8d8d8; stroke-width: 4; stroke-dasharray: 24 24; }
.yellow-edge { fill: none; stroke: #d9dda6; stroke-width: 19; }
.yellow { fill: none; stroke: #f5f8b6; stroke-width: 13; }
.orange-edge { fill: none; stroke: #dba970; stroke-width: 20; }
.orange { fill: none; stroke: #fcd6a4; stroke-width: 13; }
.salmon-edge { fill: none; stroke: #dd9a85; stroke-width: 22; }
.salmon { fill: none; stroke: #f9b29c; stroke-width: 16; }
.motor-edge { fill: none; stroke: #d9839a; stroke-width: 26; }
.motor { fill: none; stroke: #e892a2; stroke-width: 20; }
.ramp { fill: none; stroke: #e08a99; stroke-width: 9; }
.border { fill: none; stroke: #c98fcb; stroke-width: 6; stroke-dasharray: 20 10; }
.border path { stroke-linecap: butt; }
.runway { stroke: #c3c0d2; stroke-width: 18; }
.plane { fill: #8461c4; }
.peak { fill: #d28c50; }
.museum { fill: none; stroke: #888; stroke-width: 5; }
.shield rect { stroke-width: 4; }
.sh-orange { fill: #f6e2cf; stroke: #ddb993; }
.sh-yellow { fill: #eef0d6; stroke: #cfd3a4; }
.sh-red { fill: #f2d5cd; stroke: #dba79a; }
.sh-text { fill: #5f5637; font-size: 46px; font-weight: 500; text-anchor: middle; }
.red-text { fill: #7c443a; }
.place { fill: #4c4c4c; font-size: 53px; stroke: #f6f4f0; stroke-width: 5; paint-order: stroke; }
.exit { fill: #b8344e; font-size: 46px; font-style: italic; stroke: #fbf2f2; stroke-width: 5; paint-order: stroke; }
.red-route { fill: none; stroke: #a80000; stroke-width: 19; }
.green-route { fill: none; stroke: #70a800; stroke-width: 34; }
.plate { fill: #fbf400; stroke: #231f20; stroke-width: 5; }
.ink { fill: #231f20; }
.tines { fill: none; stroke: #fbf400; stroke-width: 3; }

.sign {
  position: absolute;
  top: -70px;
  left: 50%;
  width: 182px;
  height: 182px;
  margin-left: -91px;
  padding: 61px 61px 0;
  border-radius: 50%;
  background: #785547;
}
.sign svg { width: 60px; height: 80px; fill: none; stroke: #fff; stroke-width: 2; }
.round { position: absolute; width: 90px; height: 90px; border-radius: 50%; background: #785547; }
.round svg { width: 90px; height: 90px; }
.top { top: 19px; }
.bottom { bottom: 19px; }
.left { left: 20px; }
.right { right: 20px; }
.waves { fill: none; stroke: #000; stroke-width: 4; }
.lens { fill: none; stroke: #000; stroke-width: 7; }
.handle { fill: none; stroke: #000; stroke-width: 12; stroke-linecap: round; }

.layers {
  display: grid;
  grid-auto-rows: 1fr;
  min-height: 651px;
  list-style: none;
  margin: 0;
  padding: 0 0 0 37px;
}
.layers li {
  display: flex;
  align-items: center;
  padding: 0 77px 0 33px;
  border-bottom: 2px solid #dedede;
}
.layers label { font-size: 40px; line-height: 48px; }
.collapse { margin-left: 49px; }
.collapse svg { width: 59px; height: 60px; }
.layers input {
  appearance: none;
  flex: none;
  display: flex;
  align-items: center;
  width: 125px;
  height: 76px;
  margin: 0 0 0 auto;
  padding: 0 1px;
  border: 4px solid #e5e5e5;
  border-radius: 38px;
  background: #fff;
}
.layers input::before {
  content: "";
  width: 67px;
  height: 67px;
  border-radius: 50%;
  background: #fff;
  box-shadow: 0 7px 12px rgba(0, 0, 0, .2), 0 2px 2px rgba(0, 0, 0, .12);
}
.layers input:checked { justify-content: flex-end; border-color: #4cd964; background: #4cd964; }

.home { width: 330px; height: 13px; margin: auto auto 19px; border-radius: 7px; background: #000; }
```
